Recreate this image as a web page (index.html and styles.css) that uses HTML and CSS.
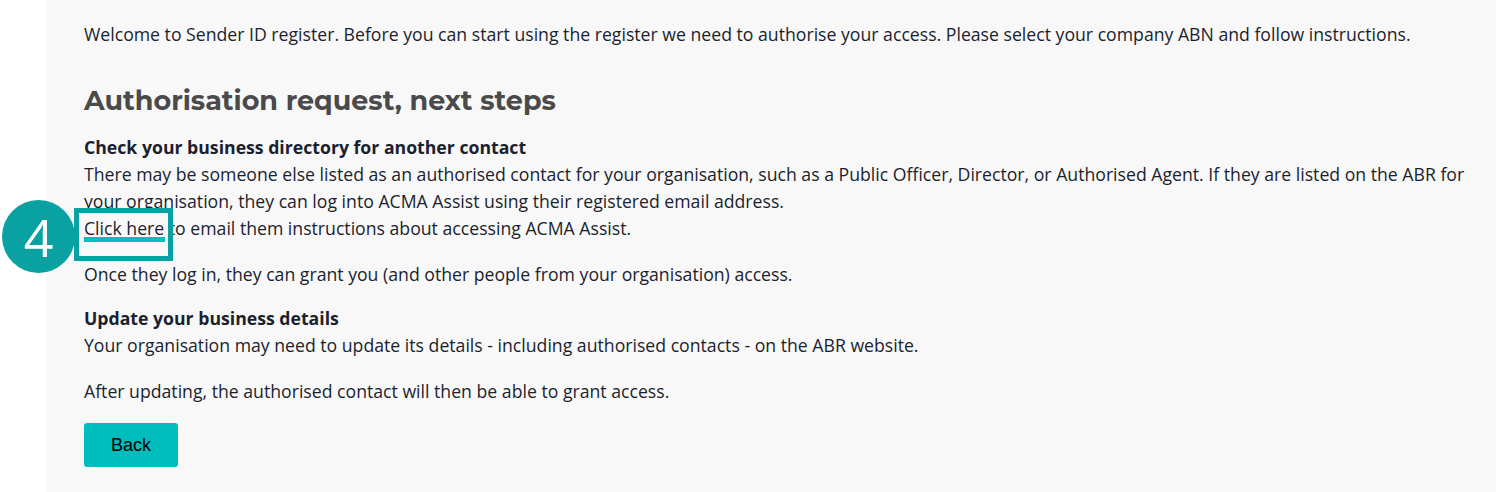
FILE: index.html
```html
<!DOCTYPE html>
<html>
<head>
<meta charset="utf-8">
<link rel="stylesheet" href="styles.css">
</head>
<body>
<div class="page">
  <main class="panel">
    <p class="intro">Welcome to Sender ID register. Before you can start using the register we need to authorise your access. Please select your company ABN and follow instructions.</p>
    <h1 class="title">Authorisation request, next steps</h1>
    <section class="block">
      <p class="lead">Check your business directory for another contact</p>
      <p class="text">There may be someone else listed as an authorised contact for your organisation, such as a Public Officer, Director, or Authorised Agent. If they are listed on the ABR for your organisation, they can log into ACMA Assist using their registered email address.<br><span class="linkwrap"><a class="link" href="#">Click here</a><span class="mark-box"></span><span class="mark-bar"></span></span> to email them instructions about accessing ACMA Assist.</p>
      <p class="text gap">Once they log in, they can grant you (and other people from your organisation) access.</p>
    </section>
    <section class="block sec2">
      <p class="lead">Update your business details</p>
      <p class="text">Your organisation may need to update its details - including authorised contacts - on the ABR website.</p>
      <p class="text gap">After updating, the authorised contact will then be able to grant access.</p>
    </section>
    <button class="btn">Back</button>
  </main>
  <div class="step">4</div>
</div>
</body>
</html>
```
FILE: styles.css
```css
html, body {
  margin: 0;
  padding: 0;
  background: #ffffff;
}
.page {
  position: relative;
  height: 492px;
  overflow: hidden;
  padding-left: 46px;
}
.panel {
  background: #f8f8f8;
  height: 492px;
  box-sizing: border-box;
  padding: 21px 20px 0 38px;
  font-family: "Open Sans", "Liberation Sans", sans-serif;
  font-size: 17.66px;
  line-height: 27px;
  color: #1b1f2e;
}
p { margin: 0; }
.title {
  font-family: "Montserrat", "Inter", "Noto Sans", sans-serif;
  font-weight: 700;
  font-size: 27px;
  line-height: 32px;
  color: #4a4a4a;
  margin: 37px 0 17px 0;
}
.lead { font-weight: 700; }
.gap { margin-top: 19px; }
.sec2 { margin-top: 17px; }
.linkwrap { position: relative; display: inline-block; }
.link { color: #1b1f2e; text-decoration: underline; text-underline-offset: 2px; }
.mark-box {
  position: absolute;
  left: -10px;
  top: -7px;
  width: 99px;
  height: 53px;
  box-sizing: border-box;
  border: 5px solid #0aa1a3;
}
.mark-bar {
  position: absolute;
  left: 0;
  top: 22px;
  width: 81px;
  height: 5px;
  background: #00bfc0;
}
.btn {
  margin-top: 18px;
  width: 94px;
  height: 44px;
  border: none;
  border-radius: 3px;
  background: #00bdbd;
  color: #000;
  font-family: "Liberation Sans", Arial, sans-serif;
  font-size: 18px;
  padding: 0;
}
.step {
  position: absolute;
  left: 2px;
  top: 200px;
  width: 73px;
  height: 73px;
  border-radius: 50%;
  background: #0aa1a3;
  color: #fff;
  font-family: "Open Sans", "Liberation Sans", sans-serif;
  font-size: 52px;
  line-height: 73px;
  text-align: center;
}
```
